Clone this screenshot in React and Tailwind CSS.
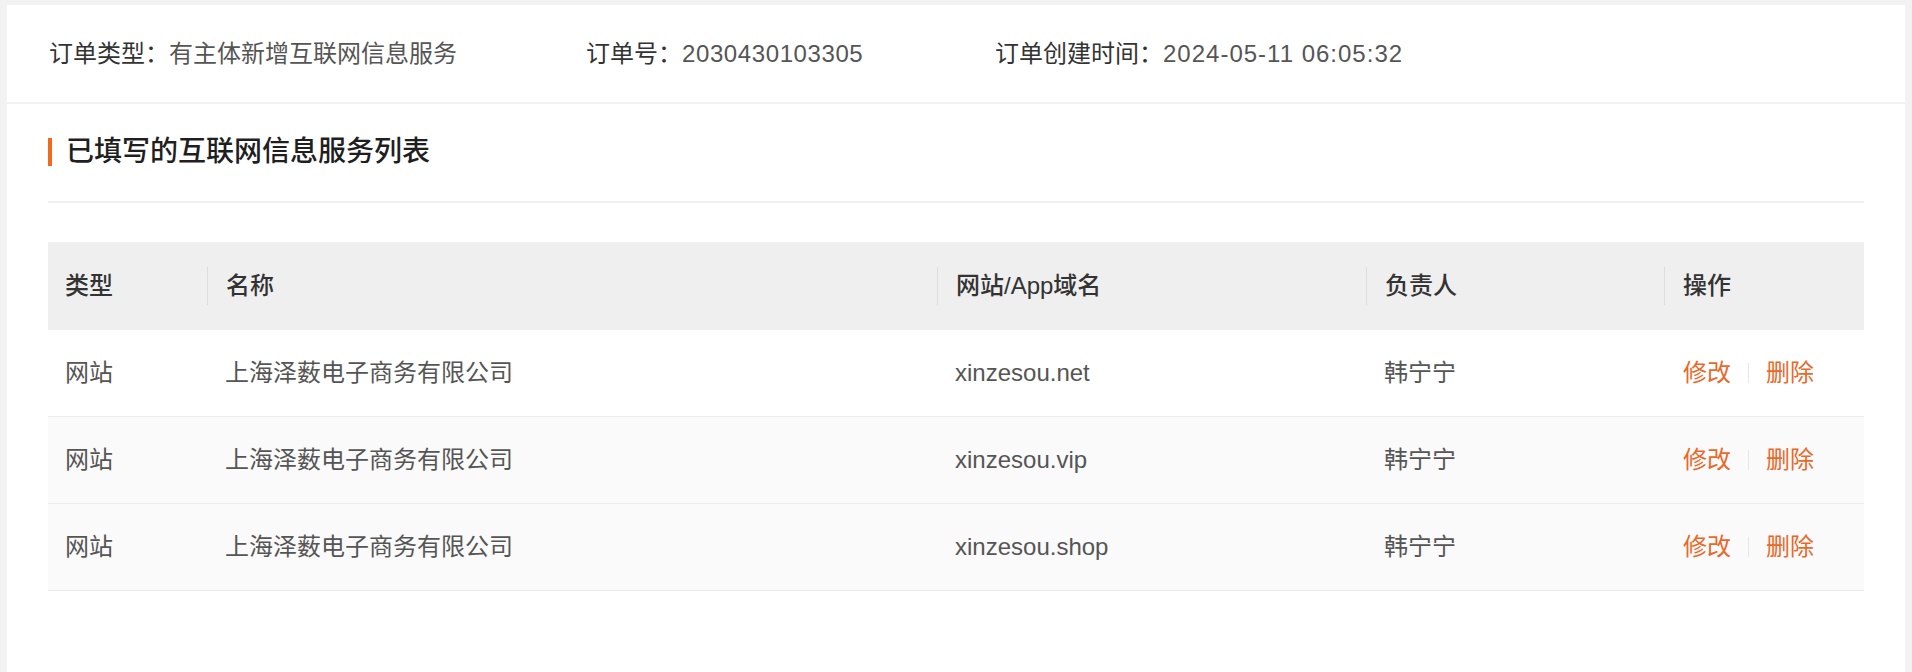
import React from 'react'

const font = { fontFamily: '"Liberation Sans", "Noto Sans CJK SC", sans-serif' }

const orderInfo = [
  { label: '订单类型：', value: '有主体新增互联网信息服务', width: 'w-[537px]', track: '' },
  { label: '订单号：', value: '2030430103305', width: 'w-[409px]', track: 'tracking-[0.6px]' },
  { label: '订单创建时间：', value: '2024-05-11 06:05:32', width: '', track: 'tracking-[1px]' },
]

const rows = [
  { type: '网站', name: '上海泽薮电子商务有限公司', domain: 'xinzesou.net', owner: '韩宁宁', bg: 'bg-white' },
  { type: '网站', name: '上海泽薮电子商务有限公司', domain: 'xinzesou.vip', owner: '韩宁宁', bg: 'bg-[#fafafa]' },
  { type: '网站', name: '上海泽薮电子商务有限公司', domain: 'xinzesou.shop', owner: '韩宁宁', bg: 'bg-[#fafafa]' },
]

const cols = 'grid grid-cols-[159px_730px_429px_298px_201px]'

const HeadCell = ({ children, first }) => (
  <div className="flex items-center h-full">
    {!first && <span className="w-px h-[38px] bg-[#dddddd]" />}
    <span className={first ? 'pl-[17px]' : 'pl-[18px]'}>{children}</span>
  </div>
)

export default function App() {
  return (
    <div className="min-h-[672px] bg-[#f2f2f2] pt-[5px] px-[7px] text-[24px]" style={font}>
      {/* order summary */}
      <div className="bg-white h-[97px] flex items-center pl-[42px]">
        {orderInfo.map((item, i) => (
          <div key={i} className={`${item.width} flex items-center leading-none`}>
            <span className="text-[#333]">{item.label}</span>
            <span className={`text-[#555] ${item.track}`}>{item.value}</span>
          </div>
        ))}
      </div>

      {/* service list */}
      <div className="bg-white mt-[2px] min-h-[568px] px-[41px] pt-[34px]">
        <div className="flex items-center h-[28px]">
          <span className="w-[4px] h-[28px] bg-[#f06a1e]" />
          <h2 className="ml-[14px] text-[28px] leading-none font-medium text-[#1f1f1f]">已填写的互联网信息服务列表</h2>
        </div>
        <div className="mt-[35px] h-[2px] bg-[#efefef]" />

        <div className="mt-[39px]">
          <div className={`${cols} h-[88px] bg-[#efefef] text-[#333] font-medium`}>
            <HeadCell first>类型</HeadCell>
            <HeadCell>名称</HeadCell>
            <HeadCell>网站/App域名</HeadCell>
            <HeadCell>负责人</HeadCell>
            <HeadCell>操作</HeadCell>
          </div>
          {rows.map((r, i) => (
            <div key={i} className={`${cols} h-[87px] ${r.bg} border-b border-[#ececec] text-[#555] items-center`}>
              <div className="pl-[17px]">{r.type}</div>
              <div className="pl-[18px]">{r.name}</div>
              <div className="pl-[18px]">{r.domain}</div>
              <div className="pl-[18px]">{r.owner}</div>
              <div className="pl-[19px] flex items-center text-[#e8692a]">
                <span>修改</span>
                <span className="mx-[17px] w-px h-[20px] bg-[#e6e6e6]" />
                <span>删除</span>
              </div>
            </div>
          ))}
        </div>
      </div>
    </div>
  )
}
